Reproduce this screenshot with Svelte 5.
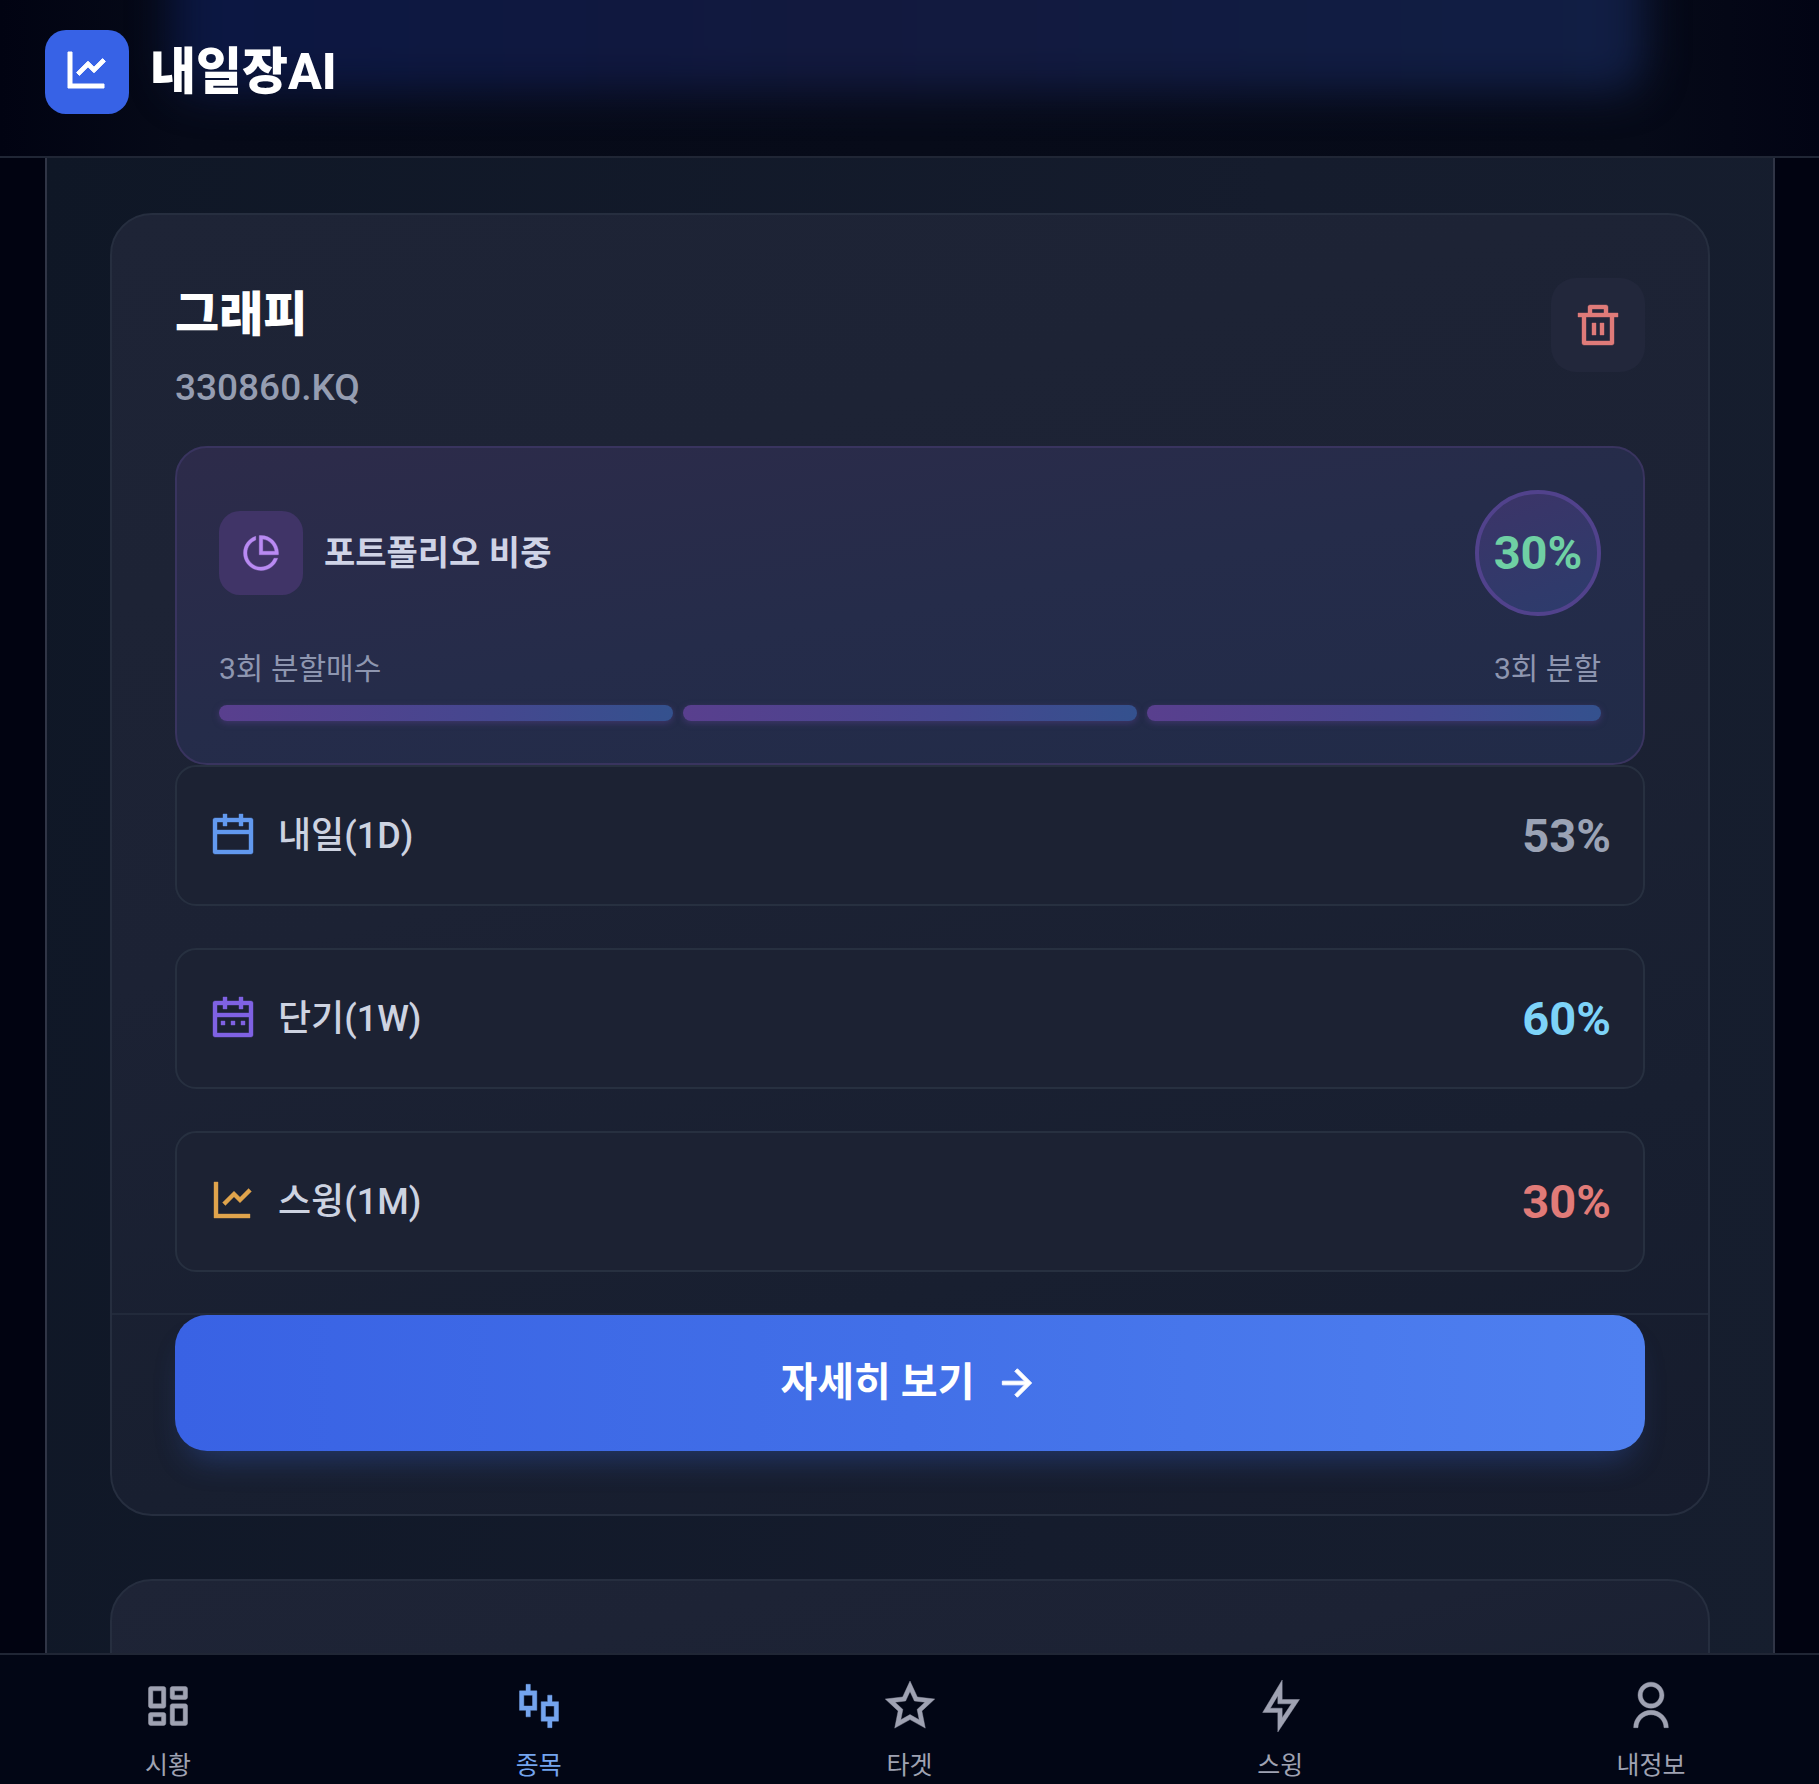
<script>
    // Icon outlines, all on a 24x24 grid
    const icons = {
        chart: 'M4.5 2V18H20.5V20H2.5V2H4.5ZM19.7929 5.29289L21.2071 6.70711L15.5 12.4142L12.5 9.415L8.20711 13.7071L6.79289 12.2929L12.5 6.58579L15.5 9.585L19.7929 5.29289Z',
        trash: 'M17 6H22V8H20V21C20 21.5523 19.5523 22 19 22H5C4.44772 22 4 21.5523 4 21V8H2V6H7V3C7 2.44772 7.44772 2 8 2H16C16.5523 2 17 2.44772 17 3V6ZM18 8H6V20H18V8ZM9 11H11V17H9V11ZM13 11H15V17H13V11ZM9 4V6H15V4H9Z',
        pie: 'M9 2.4578V4.58152C6.06817 5.76829 4 8.64262 4 12C4 16.4183 7.58172 20 12 20C15.3574 20 18.2317 17.9318 19.4185 15H21.5422C20.2679 19.0571 16.4776 22 12 22C6.47715 22 2 17.5228 2 12C2 7.52236 4.94289 3.73207 9 2.4578ZM12 2C17.5228 2 22 6.47715 22 12C22 12.3375 21.9833 12.6711 21.9506 13H11V2.04938C11.3289 2.01672 11.6625 2 12 2ZM13 4.06189V11H19.9381C19.4869 7.38128 16.6187 4.51314 13 4.06189Z',
        day: 'M9 1V3H15V1H17V3H21C21.5523 3 22 3.44772 22 4V20C22 20.5523 21.5523 21 21 21H3C2.44772 21 2 20.5523 2 20V4C2 3.44772 2.44772 3 3 3H7V1H9ZM20 11H4V19H20V11ZM7 5H4V9H20V5H17V7H15V5H9V7H7V5Z',
        week: 'M9 1V3H15V1H17V3H21C21.5523 3 22 3.44772 22 4V20C22 20.5523 21.5523 21 21 21H3C2.44772 21 2 20.5523 2 20V4C2 3.44772 2.44772 3 3 3H7V1H9ZM20 11H4V19H20V11ZM8 13V15H6V13H8ZM13 13V15H11V13H13ZM18 13V15H16V13H18ZM7 5H4V9H20V5H17V7H15V5H9V7H7V5Z',
        arrow: 'M16.1716 10.9999L10.8076 5.63589L12.2218 4.22168L20 11.9999L12.2218 19.778L10.8076 18.3638L16.1716 12.9999H4V10.9999H16.1716Z',
        dashboard: 'M14 21C13.4477 21 13 20.5523 13 20V12C13 11.4477 13.4477 11 14 11H20C20.5523 11 21 11.4477 21 12V20C21 20.5523 20.5523 21 20 21H14ZM4 13C3.44772 13 3 12.5523 3 12V4C3 3.44772 3.44772 3 4 3H10C10.5523 3 11 3.44772 11 4V12C11 12.5523 10.5523 13 10 13H4ZM9 11V5H5V11H9ZM4 21C3.44772 21 3 20.5523 3 20V16C3 15.4477 3.44772 15 4 15H10C10.5523 15 11 15.4477 11 16V20C11 20.5523 10.5523 21 10 21H4ZM5 19H9V17H5V19ZM15 19H19V13H15V19ZM13 4C13 3.44772 13.4477 3 14 3H20C20.5523 3 21 3.44772 21 4V8C21 8.55228 20.5523 9 20 9H14C13.4477 9 13 8.55228 13 8V4ZM15 5V7H19V5H15Z',
        stock: 'M8 5H11V14H8V17H6V14H3V5H6V2H8V5ZM5 7V12H9V7H5ZM18 10H21V19H18V22H16V19H13V10H16V7H18V10ZM15 12V17H19V12H15Z',
        star: 'M12.0006 18.26L4.94715 22.2082L6.52248 14.2799L0.587891 8.7918L8.61493 7.84006L12.0006 0.5L15.3862 7.84006L23.4132 8.7918L17.4787 14.2799L19.054 22.2082L12.0006 18.26ZM12.0006 15.968L16.2473 18.3451L15.2988 13.5717L18.8719 10.2674L14.039 9.69434L12.0006 5.27502L9.96214 9.69434L5.12921 10.2674L8.70231 13.5717L7.75383 18.3451L12.0006 15.968Z',
        flash: 'M13 9H21L11 24V15H4L13 0V9ZM11 11V7.22063L7.53238 13H13V17.3944L17.263 11H11Z',
        user: 'M4 22C4 17.5817 7.58172 14 12 14C16.4183 14 20 17.5817 20 22H18C18 18.6863 15.3137 16 12 16C8.68629 16 6 18.6863 6 22H4ZM12 13C8.685 13 6 10.315 6 7C6 3.685 8.685 1 12 1C15.315 1 18 3.685 18 7C18 10.315 15.315 13 12 13ZM12 11C14.21 11 16 9.21 16 7C16 4.79 14.21 3 12 3C9.79 3 8 4.79 8 7C8 9.21 9.79 11 12 11Z'
    };

    const stock = { name: '그래피', ticker: '330860.KQ', weight: 30, splits: 3 };

    const forecasts = [
        { key: 'day', icon: 'day', label: '내일(1D)', value: 53, tone: 'neutral' },
        { key: 'week', icon: 'week', label: '단기(1W)', value: 60, tone: 'up' },
        { key: 'month', icon: 'chart', label: '스윙(1M)', value: 30, tone: 'down' }
    ];

    const tabs = [
        { icon: 'dashboard', label: '시황' },
        { icon: 'stock', label: '종목' },
        { icon: 'star', label: '타겟' },
        { icon: 'flash', label: '스윙' },
        { icon: 'user', label: '내정보' }
    ];

    let activeTab = $state('종목');
</script>

{#snippet icon(name)}
    <svg class="icon" viewBox="0 0 24 24" aria-hidden="true"><path d={icons[name]} /></svg>
{/snippet}

<div class="app">
    <header>
        <a class="brand" href="#home">
            <span class="logo">{@render icon('chart')}</span>
            <span class="brand-name">내일장AI</span>
        </a>
    </header>

    <main>
        <section class="panel">
            <article class="card">
                <div class="card-head">
                    <div>
                        <h2>{stock.name}</h2>
                        <p class="ticker">{stock.ticker}</p>
                    </div>
                    <button class="delete" aria-label="삭제">{@render icon('trash')}</button>
                </div>

                <div class="portfolio">
                    <div class="portfolio-head">
                        <span class="pie">{@render icon('pie')}</span>
                        <h3>포트폴리오 비중</h3>
                        <span class="weight">{stock.weight}%</span>
                    </div>
                    <div class="split-labels">
                        <span>{stock.splits}회 분할매수</span>
                        <span>{stock.splits}회 분할</span>
                    </div>
                    <div class="splits">
                        {#each Array(stock.splits) as _}
                            <span class="split"></span>
                        {/each}
                    </div>
                </div>

                <ul class="forecasts">
                    {#each forecasts as row (row.key)}
                        <li class={row.key}>
                            {@render icon(row.icon)}
                            <span class="label">{row.label}</span>
                            <span class={`value ${row.tone}`}>{row.value}%</span>
                        </li>
                    {/each}
                </ul>

                <div class="card-foot">
                    <button class="detail">
                        자세히 보기
                        {@render icon('arrow')}
                    </button>
                </div>
            </article>

            <article class="card next"></article>
        </section>
    </main>

    <nav>
        {#each tabs as tab (tab.label)}
            <a href={`#${tab.icon}`} class:active={activeTab === tab.label} onclick={() => (activeTab = tab.label)}>
                {@render icon(tab.icon)}
                <span>{tab.label}</span>
            </a>
        {/each}
    </nav>
</div>

<style>
:global(body) {
    margin: 0;
    background: #010311;
}

.app {
    display: flex;
    flex-direction: column;
    height: 100vh;
    overflow: hidden;
    color: #fff;
    font-family: Roboto, "Noto Sans CJK KR", sans-serif;
}
.app * {
    box-sizing: border-box;
}

h2, h3, p, ul {
    margin: 0;
    padding: 0;
}
a {
    color: inherit;
    text-decoration: none;
}
button {
    border: 0;
    padding: 0;
    font-family: inherit;
    color: inherit;
    cursor: pointer;
}
.icon {
    display: block;
    flex: none;
    width: 48px;
    height: 48px;
    fill: currentColor;
    stroke: currentColor;
    stroke-width: 0.2;
}
.logo .icon,
.detail .icon {
    stroke-width: 0.5;
}

header {
    position: relative;
    flex: none;
    overflow: hidden;
    padding: 30px 45px 42px;
    border-bottom: 2px solid #202635;
    background: linear-gradient(90deg, #010312 0, #060a18 10%, #070b19 50%, #060a18 90%, #020414 100%);
}
header::before {
    content: '';
    position: absolute;
    top: -80px;
    left: 172px;
    right: 175px;
    height: 172px;
    border-radius: 32px;
    background: linear-gradient(90deg, #0b1742, #12193e 45%, #111e44);
    filter: blur(20px);
}
.brand {
    position: relative;
    display: inline-flex;
    align-items: center;
    gap: 21px;
    vertical-align: top;
}
.logo {
    display: grid;
    place-items: center;
    width: 84px;
    height: 84px;
    border-radius: 21px;
    background: #3762e6;
}
.brand-name {
    font-size: 50px;
    font-weight: 800;
    line-height: 72px;
}

main {
    flex: 1;
    min-height: 0;
    overflow: hidden;
    padding: 0 44px 0 45px;
}
.panel {
    min-height: 100%;
    padding: 55px 63px;
    border: 2px solid #303546;
    border-width: 0 2px;
    background: linear-gradient(100deg, #0f1726, #151c2d 60%, #161e2e);
}

.card {
    border: 2px solid #262e3f;
    border-radius: 42px;
    background: linear-gradient(165deg, #1e2436, #1c2234 45%, #181f30 75%, #161c2d);
}
.card.next {
    height: 400px;
    margin-top: 63px;
}
.card-head {
    display: flex;
    justify-content: space-between;
    align-items: flex-start;
    padding: 63px 63px 32px;
}
h2 {
    font-size: 48px;
    font-weight: 800;
    line-height: 74px;
}
.ticker {
    margin-top: 10px;
    font-size: 37px;
    font-weight: 500;
    line-height: 52px;
    color: #959db1;
}
.delete {
    display: grid;
    place-items: center;
    width: 94px;
    height: 94px;
    border-radius: 25px;
    background: #22273b;
    color: #df7b79;
}

.portfolio {
    margin: 0 63px;
    padding: 42px;
    border: 2px solid #39345f;
    border-radius: 32px;
    background: linear-gradient(170deg, #2d2b4a, #252c4a 50%, #212b48);
}
.portfolio-head {
    display: flex;
    align-items: center;
    gap: 21px;
}
.pie {
    display: grid;
    place-items: center;
    width: 84px;
    height: 84px;
    border-radius: 21px;
    background: #403467;
    color: #b98af3;
}
.pie .icon {
    width: 42px;
    height: 42px;
}
h3 {
    font-size: 34px;
    font-weight: 600;
    line-height: 52px;
    color: #cfd3e6;
}
.weight {
    display: grid;
    place-items: center;
    width: 126px;
    height: 126px;
    margin-left: auto;
    border: 4px solid #51428c;
    border-radius: 50%;
    background: linear-gradient(160deg, #3c3468, #2c3c6c);
    font-size: 47px;
    font-weight: 700;
    line-height: 72px;
    color: #6fd0a4;
}
.split-labels {
    display: flex;
    justify-content: space-between;
    margin: 32px 0 15px;
    font-size: 30px;
    line-height: 42px;
    color: #8e96b0;
}
.splits {
    display: flex;
    gap: 10px;
}
.split {
    flex: 1;
    height: 16px;
    border-radius: 8px;
    background: linear-gradient(90deg, #593f8e, #45478f 60%, #34518e);
    box-shadow: 0 2px 6px rgba(89, 63, 142, 0.5);
}

.forecasts {
    display: flex;
    flex-direction: column;
    gap: 42px;
    padding: 0 63px 41px;
    list-style: none;
}
.forecasts li {
    display: flex;
    align-items: center;
    gap: 21px;
    height: 141px;
    padding: 0 32px;
    border: 2px solid #273040;
    border-radius: 21px;
    background: #1c2233;
}
.day {
    color: #6299ef;
}
.week {
    color: #7f62e3;
}
.month {
    color: #e0a44c;
}
.label {
    font-size: 36px;
    font-weight: 500;
    line-height: 52px;
    color: #cdd3e1;
}
.value {
    margin-left: auto;
    font-size: 47px;
    font-weight: 700;
    line-height: 72px;
}
.neutral {
    color: #9ba3b5;
}
.up {
    color: #7dd3f8;
}
.down {
    color: #e17b78;
}

.card-foot {
    padding: 0 63px 63px;
    border-top: 2px solid #222a3b;
}
.detail {
    display: flex;
    justify-content: center;
    align-items: center;
    gap: 21px;
    width: 100%;
    height: 136px;
    border-radius: 32px;
    background: linear-gradient(90deg, #3962e4, #4270e8 50%, #4f80f0);
    box-shadow: 0 20px 32px -14px rgba(59, 110, 230, 0.35);
    font-size: 40px;
    font-weight: 600;
    line-height: 52px;
}
.detail .icon {
    width: 44px;
    height: 44px;
}

nav {
    display: flex;
    flex: none;
    justify-content: space-between;
    padding: 25px 84px 0;
    border-top: 2px solid #202635;
    background: #020615;
}
nav a {
    display: flex;
    flex-direction: column;
    align-items: center;
    gap: 16px;
    width: 168px;
    font-size: 25px;
    line-height: 36px;
    color: #9fa2b2;
}
nav a.active {
    color: #74a4ee;
}
nav .icon {
    width: 52px;
    height: 52px;
}
</style>
